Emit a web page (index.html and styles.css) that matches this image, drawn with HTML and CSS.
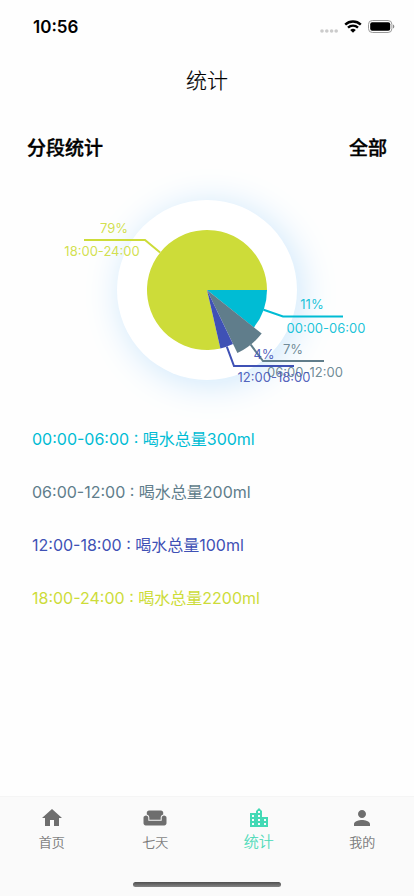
FILE: index.html
```html
<!DOCTYPE html>
<html lang="zh-CN">
<head>
<meta charset="utf-8">
<meta name="viewport" content="width=device-width, initial-scale=1">
<title>统计</title>
<link rel="stylesheet" href="styles.css">
</head>
<body>
<div class="status-bar">
  <span class="clock">10:56</span>
  <div class="status-icons">
    <svg width="18" height="4" viewBox="0 0 18 4" fill="#cbcbcb" aria-hidden="true"><circle cx="2" cy="2" r="1.8"/><circle cx="6.8" cy="2" r="1.8"/><circle cx="11.6" cy="2" r="1.8"/><circle cx="16.2" cy="2" r="1.8"/></svg>
    <svg class="wifi" width="18" height="13" viewBox="0 0 18 13" aria-hidden="true"><path d="M1.2 4.6A11.4 11.4 0 0 1 16.8 4.6M4 7.6A7.3 7.3 0 0 1 14 7.6" fill="none" stroke="#000" stroke-width="2.4"/><path d="M6.2 10A4.2 4.2 0 0 1 11.8 10L9 12.8Z"/></svg>
    <svg class="battery" width="27" height="13" viewBox="0 0 27 13" aria-hidden="true"><rect x=".5" y=".5" width="23.4" height="12" rx="3.8" fill="none" stroke="#999"/><rect x="2.2" y="2.2" width="20" height="8.6" rx="2"/><path d="M25 4.5C26.8 5.1 26.8 7.9 25 8.5Z" fill="#888"/></svg>
  </div>
</div>
<header class="title-bar"><h1>统计</h1></header>
<main>
  <div class="section-head">
    <h2>分段统计</h2>
    <button type="button" class="filter">全部</button>
  </div>
  <div class="dial">
    <svg class="chart" viewBox="-90 -90 180 180" role="img" aria-label="分段统计">
      <g class="lime">
        <path class="slice" d="M0 0L13.4 58.5A60 60 0 1 1 60 0Z"/>
        <path class="leader" d="M-46.9 -37.4L-62 -50H-123"/>
        <text x="-93" y="-57">79%</text><text x="-105" y="-34">18:00-24:00</text>
      </g>
      <g class="cyan">
        <path class="slice" d="M0 0H60A60 60 0 0 1 46.9 37.4Z"/>
        <path class="leader" d="M56.6 19.8L76 26.5H136"/>
        <text x="105" y="19">11%</text><text x="119" y="43">00:00-06:00</text>
      </g>
      <g class="slate">
        <path class="slice" d="M0 0L54.7 43.6A70 70 0 0 1 30.4 63.1Z"/>
        <path class="leader" d="M43.7 54.7L56 71H117"/>
        <text x="86" y="64">7%</text><text x="98" y="87">06:00-12:00</text>
      </g>
      <g class="indigo">
        <path class="slice" d="M0 0L26 54.1A60 60 0 0 1 13.4 58.5Z"/>
        <path class="leader" d="M19.8 56.6L27 76H87"/>
        <text x="57" y="69">4%</text><text x="67" y="92">12:00-18:00</text>
      </g>
    </svg>
  </div>
  <ul class="totals">
    <li class="cyan">00:00-06:00 : 喝水总量300ml</li>
    <li class="slate">06:00-12:00 : 喝水总量200ml</li>
    <li class="indigo">12:00-18:00 : 喝水总量100ml</li>
    <li class="lime">18:00-24:00 : 喝水总量2200ml</li>
  </ul>
</main>
<nav class="tabs">
  <a href="#home"><svg viewBox="0 0 24 24" aria-hidden="true"><path d="M10 20v-6h4v6h5v-8h3L12 3 2 12h3v8z"/></svg><span>首页</span></a>
  <a href="#week"><svg viewBox="0 0 24 24" aria-hidden="true"><path d="M21 9.500c-1.300 0-2.300 1-2.300 2.200v3H5.300v-3c0-1.200-1-2.200-2.300-2.200S.5 10.500.5 11.700v5.500c0 1.200 1 2.200 2.200 2.200h18.600c1.200 0 2.200-1 2.200-2.200v-5.500c0-1.200-1.200-2.200-2.500-2.200zM18 4.500H6c-1.200 0-2.200 1-2.200 2.100v2c1.400.300 2.500 1.500 2.500 3v2.100h11.400v-2.100c0-1.500 1.100-2.700 2.500-3v-2c0-1.100-1-2.100-2.200-2.100z"/></svg><span>七天</span></a>
  <a href="#stats" class="active" aria-current="page"><svg viewBox="0 0 24 24" aria-hidden="true"><path d="M15 11V5l-3-3-3 3v2H3v14h18V11h-6zm-8 8H5v-2h2v2zm0-4H5v-2h2v2zm0-4H5V9h2v2zm6 8h-2v-2h2v2zm0-4h-2v-2h2v2zm0-4h-2V9h2v2zm0-4h-2V5h2v2zm6 12h-2v-2h2v2zm0-4h-2v-2h2v2z"/></svg><span>统计</span></a>
  <a href="#me"><svg viewBox="0 0 24 24" aria-hidden="true"><path d="M12 12c2.210 0 4-1.790 4-4s-1.790-4-4-4-4 1.790-4 4 1.790 4 4 4zm0 2c-2.670 0-8 1.340-8 4v2h16v-2c0-2.660-5.330-4-8-4z"/></svg><span>我的</span></a>
  <div class="home-indicator"></div>
</nav>
</body>
</html>
```
FILE: styles.css
```css
* { box-sizing: border-box; }
body {
  margin: 0;
  min-height: 100vh;
  display: flex;
  flex-direction: column;
  background: #fefefe;
  color: #000;
  font-family: Inter, "Noto Sans CJK SC", sans-serif;
}
h1, h2, ul { margin: 0; padding: 0; }
.status-bar {
  display: flex;
  justify-content: space-between;
  align-items: center;
  height: 53px;
  padding: 0 19px 0 33px;
}
.clock { font-size: 17px; font-weight: 600; }
.status-icons { display: flex; align-items: flex-end; gap: 6px; }
.title-bar {
  display: flex;
  justify-content: center;
  align-items: center;
  height: 52px;
}
h1 { font-size: 21px; font-weight: 300; -webkit-text-stroke: 0.2px; }
main { flex: 1; }
.section-head {
  display: flex;
  justify-content: space-between;
  align-items: center;
  padding: 28px 27px 0;
  line-height: 32px;
}
h2, .filter { font-size: 19px; font-weight: 500; -webkit-text-stroke: 0.4px; }
.filter {
  border: 0;
  padding: 0;
  background: none;
  color: inherit;
  font-family: inherit;
  line-height: inherit;
}
.dial {
  width: 180px;
  height: 180px;
  margin: 35px auto 0;
  border-radius: 50%;
  background: #fff;
  box-shadow: 4px 4px 36px #cce7fc;
}
.chart { display: block; width: 100%; height: 100%; overflow: visible; }
.chart text { fill: currentColor; fill-opacity: 0.9; font-size: 13px; text-anchor: middle; }
.slice { fill: currentColor; }
.leader { fill: none; stroke: currentColor; stroke-width: 2; }
.lime { color: #cddc39; }
.cyan { color: #00bcd4; }
.slate { color: #607d8b; }
.indigo { color: #3f51b5; }
.totals {
  display: grid;
  gap: 29px;
  margin-top: 47px;
  padding: 0 32px;
  list-style: none;
  font-size: 16px;
  line-height: 24px;
}
.tabs {
  position: relative;
  display: grid;
  grid-template-columns: repeat(4, 1fr);
  height: 100px;
  border-top: 1px solid #f5f5f5;
  background: #fafafa;
}
.tabs a {
  display: flex;
  flex-direction: column;
  align-items: center;
  padding-top: 9px;
  color: #6e6e6e;
  font-size: 13px;
  font-weight: 300;
  line-height: 24px;
  text-decoration: none;
  -webkit-text-stroke: 0.2px;
}
.tabs svg { width: 24px; height: 24px; fill: currentColor; }
.tabs .active { color: #43d9b5; font-size: 15px; }
.home-indicator {
  position: absolute;
  left: 50%;
  bottom: 9px;
  width: 148px;
  height: 5px;
  border-radius: 3px;
  background: linear-gradient(#505050, #858585);
  transform: translateX(-50%);
}
```
